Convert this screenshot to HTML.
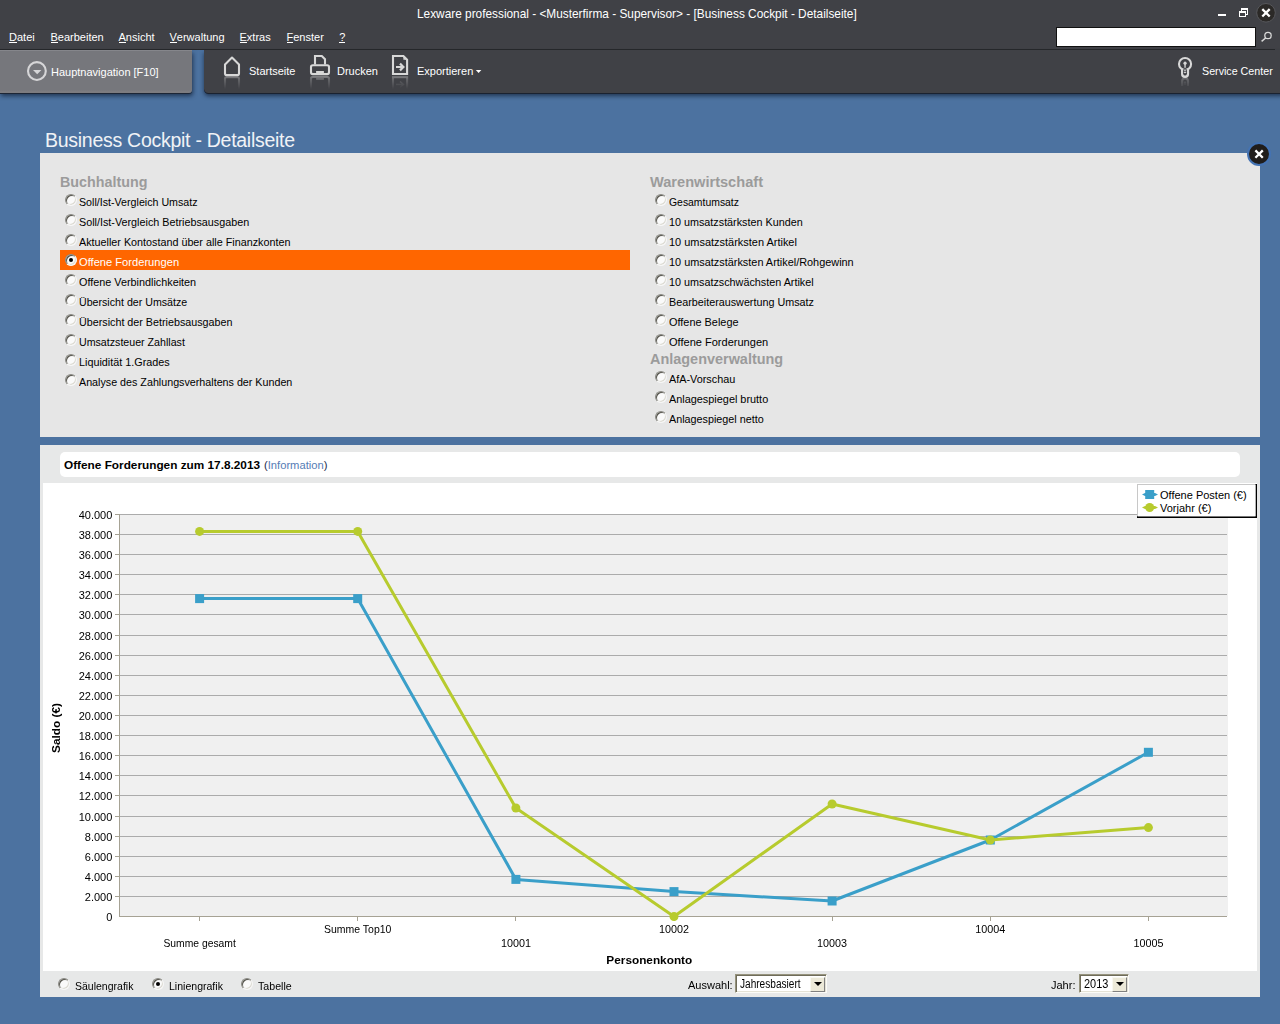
<!DOCTYPE html>
<html>
<head>
<meta charset="utf-8">
<title>Lexware professional</title>
<style>
*{box-sizing:border-box;margin:0;padding:0}
html,body{width:1280px;height:1024px;overflow:hidden}
body{background:#4c72a0;font-family:"Liberation Sans",sans-serif;font-size:11px;color:#000;position:relative}
.abs{position:absolute}
.t{position:absolute;white-space:nowrap;line-height:14px}
#top{left:0;top:0;width:1280px;height:50px;background:#404146}
#topline{left:0;top:49px;width:1275px;height:1px;background:#27282b}
#title{left:417px;top:6.5px;color:#fff;font-size:11.85px;line-height:15px}
.menu{top:30px;color:#fff;font-size:11px}
.menu u{text-decoration:none;position:relative}.menu u:after{content:"";position:absolute;left:0;right:0;top:11px;height:1px;background:#fff}
#search{left:1056px;top:27px;width:200px;height:20px;background:#fff;border:1px solid #111}
#navtab{left:0;top:50px;width:192px;height:43px;background:linear-gradient(#85868b 0,#85868b 1px,#76777c 1.5px,#76777c 40px,#7d7c80 41.5px);border-radius:0 0 3.5px 0;box-shadow:0 1px 0 #1d2636,1px 3px 4px rgba(15,28,50,.7)}
#toolbar{left:204px;top:50px;width:1080px;height:43px;background:#404146;border-radius:0 0 0 4.5px;box-shadow:0 1px 0 #1a2230,0 3px 4px rgba(15,28,50,.7)}
.tb{color:#fff;font-size:11px;top:63.5px}
#h1{left:45px;top:129px;font-size:19.5px;line-height:22px;letter-spacing:-0.27px;color:#f0f2f6}
#p1{left:40px;top:153px;width:1220px;height:284px;background:#e6e6e6}
#p2{left:40px;top:445px;width:1220px;height:552px;background:#e7e8e8}
#p2w{left:43px;top:483px;width:1214px;height:488px;background:#fff}
#tbox{left:60px;top:452px;width:1180px;height:25px;background:#fff;border-radius:5px}
.grp{font-weight:bold;font-size:14.2px;color:#9b9b9b;line-height:16px}
.opt{font-size:11px;line-height:14px}
.rb{position:absolute;width:12px;height:12px;border-radius:50%;background:#fafafa;border:1px solid;border-color:#8a8a84 #f6f6f6 #f6f6f6 #8a8a84;box-shadow:inset 1px 1px 0 #55544c,inset -1px -1px 0 #dcdad2}
.rb.on:after{content:"";position:absolute;left:3px;top:3px;width:4px;height:4px;border-radius:50%;background:#000}
#sel{left:60px;top:250px;width:570px;height:20px;background:#ff6600}
#close{left:1246.8px;top:141.7px;width:24.5px;height:24.5px;border-radius:50%;background:#201d1b;border:2.5px solid #4473b3}
svg text{font-family:"Liberation Sans",sans-serif}
.ax{font-size:11px;fill:#000}
.axb{font-size:11.8px;font-weight:bold;fill:#000}
.combo{position:absolute;height:19px;background:#fff;border:1px solid;border-color:#96937d #fbfbf8 #fbfbf8 #96937d;box-shadow:inset 1px 1px 0 #6f6c5a,inset -1px -1px 0 #e4e2d6}
.combo .btn{position:absolute;right:1px;top:1.5px;width:15.5px;height:15px;background:#ece9d8;border:1px solid;border-color:#f8f8f0 #808080 #808080 #f8f8f0}
.combo .btn:after{content:"";position:absolute;left:3px;top:4px;border:4px solid transparent;border-top:4px solid #000;border-bottom:0}
.combo span{position:absolute;left:4px;top:1.5px;font-size:12.5px;line-height:15px;color:#000;transform:scaleX(.83);transform-origin:left;white-space:nowrap}
</style>
</head>
<body>
<div class="abs" id="top"></div>
<div class="abs" id="topline"></div>
<div class="t" id="title">Lexware professional - &lt;Musterfirma - Supervisor&gt; - [Business Cockpit - Detailseite]</div>

<div class="t menu" style="left:9px"><u>D</u>atei</div>
<div class="t menu" style="left:50.5px"><u>B</u>earbeiten</div>
<div class="t menu" style="left:118.5px"><u>A</u>nsicht</div>
<div class="t menu" style="left:169.5px"><u>V</u>erwaltung</div>
<div class="t menu" style="left:239.5px"><u>E</u>xtras</div>
<div class="t menu" style="left:286.5px"><u>F</u>enster</div>
<div class="t menu" style="left:339.3px"><u>?</u></div>

<div class="abs" id="search"></div>

<div class="abs" id="navtab"></div>
<div class="abs" id="toolbar"></div>
<div class="t tb" style="left:51px;top:64.5px">Hauptnavigation [F10]</div>
<div class="t tb" style="left:249px">Startseite</div>
<div class="t tb" style="left:337px">Drucken</div>
<div class="t tb" style="left:417px">Exportieren</div>
<div class="t tb" style="left:1202px;font-size:10.7px">Service Center</div>

<!-- icons -->
<svg class="abs" style="left:0;top:0" width="1280" height="110" viewBox="0 0 1280 110">
 <defs>
  <linearGradient id="fade" x1="0" y1="76" x2="0" y2="89" gradientUnits="userSpaceOnUse">
   <stop offset="0" stop-color="#fff" stop-opacity=".45"/><stop offset=".25" stop-color="#fff" stop-opacity=".25"/><stop offset="1" stop-color="#fff" stop-opacity="0"/>
  </linearGradient>
  <mask id="fm" maskUnits="userSpaceOnUse" x="0" y="74" width="1280" height="20"><rect x="0" y="74" width="1280" height="20" fill="url(#fade)"/></mask>
 </defs>
 <!-- window controls -->
 <rect x="1218" y="14" width="8" height="2" fill="#fff"/>
 <g fill="none" stroke="#fff" stroke-width="1">
  <rect x="1241.5" y="9.5" width="6" height="5"/><rect x="1241" y="8" width="7" height="2" fill="#fff" stroke="none"/>
  <rect x="1239.5" y="12.5" width="6" height="4" fill="#404146"/><rect x="1239" y="11" width="7" height="2" fill="#fff" stroke="none"/>
 </g>
 <circle cx="1266" cy="12.8" r="9.3" fill="#2b2927" stroke="#56575b" stroke-width="1"/>
 <path d="M1262.3 9.1 L1269.7 16.5 M1269.7 9.1 L1262.3 16.5" stroke="#fff" stroke-width="2.3"/>
 <!-- magnifier -->
 <circle cx="1268" cy="35.5" r="3.2" fill="none" stroke="#d8d8d8" stroke-width="1.3"/>
 <path d="M1265.6 38 L1261.6 41.4" stroke="#d8d8d8" stroke-width="1.5"/>
 <!-- nav circle -->
 <circle cx="36.9" cy="71.05" r="8.9" fill="none" stroke="#d6d6d8" stroke-width="2.1"/>
 <path d="M33 70.1 h8.4 l-4.2 4.2 z" fill="#d6d6d8"/>
 <g id="ic" fill="none" stroke="#d8d8d8" stroke-width="2.1" stroke-linejoin="round">
  <!-- home -->
  <path d="M225 73.6 V64.6 L232 57.6 L239 64.6 V73.6 Q239 75.1 237.5 75.1 H226.5 Q225 75.1 225 73.6 Z"/>
  <!-- printer -->
  <path d="M315 64.5 V56 H321.8 L325 59.2 V64.5" stroke-linejoin="miter"/>
  <rect x="311" y="65.2" width="18" height="8.9" rx="1.8"/>
  <rect x="316.1" y="71" width="7.8" height="3.6" fill="#d8d8d8" stroke="none"/>
  <!-- export -->
  <path d="M393 74 V56 H403.4 L407.1 59.7 V74 Z" stroke-linejoin="miter"/>
  <path d="M403.4 55.5 V59.7 H407.6 Z" fill="#d8d8d8" stroke="none"/>
  <path d="M396 67 H402.5" stroke-width="2"/>
  <path d="M400 63.6 L403.4 67 L400 70.4" stroke-width="2.2" stroke-linejoin="miter"/>
  <!-- bulb -->
  <circle cx="1185.05" cy="64" r="6.05"/>
  <path d="M1182.2 68.8 V73.9 a2.85 2.85 0 0 0 5.7 0 V68.8" stroke-width="2.4"/>
 </g>
 <rect x="1183.1" y="69.4" width="3.9" height="4.8" fill="#404146"/>
 <rect x="1183.8" y="70.3" width="2.4" height="1" fill="#d8d8d8"/><rect x="1183.8" y="72.1" width="2.4" height="1" fill="#d8d8d8"/>
 <circle cx="1185.05" cy="63.2" r="1.6" fill="#d8d8d8"/><rect x="1184.35" y="63.2" width="1.4" height="4.6" fill="#d8d8d8"/>
 <path d="M475.8 70 h5.6 l-2.8 3 z" fill="#fff"/>
 <!-- reflections -->
 <g mask="url(#fm)" fill="none" stroke="#d8d8d8" stroke-width="2.1">
  <path d="M225 90 V78.5 Q225 77.2 226.5 77.2 H237.5 Q239 77.2 239 78.5 V90"/>
  <path d="M311 90 V78.8 Q311 77 312.8 77 H327.2 Q329 77 329 78.8 V90"/>
  <rect x="316.1" y="76.6" width="7.8" height="3.4" fill="#d8d8d8" stroke="none"/>
  <path d="M393 90 V77.2 H407.1 V90"/>
  <path d="M396 84.5 H402.5 M400 81.5 L403.4 84.5 L400 87.5" stroke-width="1.6" opacity=".8"/>
  <path d="M1182.1 86 V81.3 a2.95 2.95 0 0 1 5.9 0 V86"/>
  <path d="M1183.8 82.2 h2.4 M1183.8 84 h2.4" stroke-width="1"/>
 </g>
</svg>

<div class="t" id="h1">Business Cockpit - Detailseite</div>

<div class="abs" id="p1"></div>
<div class="abs" id="sel"></div>
<div class="t grp" style="left:60px;top:174.2px;font-size:14.3px">Buchhaltung</div>
<div class="t grp" style="left:650px;top:174.2px;font-size:14.6px">Warenwirtschaft</div>
<div class="t grp" style="left:650px;top:351px;font-size:14.45px">Anlagenverwaltung</div>
<div class="rb" style="left:65px;top:194px"></div>
<div class="t opt" style="transform:scaleX(0.9697);transform-origin:left;left:79px;top:194.8px">Soll/Ist-Vergleich Umsatz</div>
<div class="rb" style="left:65px;top:214px"></div>
<div class="t opt" style="transform:scaleX(0.9798);transform-origin:left;left:79px;top:214.8px">Soll/Ist-Vergleich Betriebsausgaben</div>
<div class="rb" style="left:65px;top:234px"></div>
<div class="t opt" style="transform:scaleX(0.9792);transform-origin:left;left:79px;top:234.8px">Aktueller Kontostand über alle Finanzkonten</div>
<div class="rb on" style="left:65px;top:254px"></div>
<div class="t opt" style="color:#fff;transform:scaleX(1.0122);transform-origin:left;left:79px;top:254.8px">Offene Forderungen</div>
<div class="rb" style="left:65px;top:274px"></div>
<div class="t opt" style="transform:scaleX(0.9840);transform-origin:left;left:79px;top:274.8px">Offene Verbindlichkeiten</div>
<div class="rb" style="left:65px;top:294px"></div>
<div class="t opt" style="transform:scaleX(0.9670);transform-origin:left;left:79px;top:294.8px">Übersicht der Umsätze</div>
<div class="rb" style="left:65px;top:314px"></div>
<div class="t opt" style="transform:scaleX(0.9764);transform-origin:left;left:79px;top:314.8px">Übersicht der Betriebsausgaben</div>
<div class="rb" style="left:65px;top:334px"></div>
<div class="t opt" style="transform:scaleX(0.9673);transform-origin:left;left:79px;top:334.8px">Umsatzsteuer Zahllast</div>
<div class="rb" style="left:65px;top:354px"></div>
<div class="t opt" style="transform:scaleX(0.9826);transform-origin:left;left:79px;top:354.8px">Liquidität 1.Grades</div>
<div class="rb" style="left:65px;top:374px"></div>
<div class="t opt" style="transform:scaleX(0.9744);transform-origin:left;left:79px;top:374.8px">Analyse des Zahlungsverhaltens der Kunden</div>
<div class="rb" style="left:655px;top:194px"></div>
<div class="t opt" style="transform:scaleX(0.9459);transform-origin:left;left:669px;top:194.8px">Gesamtumsatz</div>
<div class="rb" style="left:655px;top:214px"></div>
<div class="t opt" style="transform:scaleX(0.9801);transform-origin:left;left:669px;top:214.8px">10 umsatzstärksten Kunden</div>
<div class="rb" style="left:655px;top:234px"></div>
<div class="t opt" style="transform:scaleX(0.9961);transform-origin:left;left:669px;top:234.8px">10 umsatzstärksten Artikel</div>
<div class="rb" style="left:655px;top:254px"></div>
<div class="t opt" style="transform:scaleX(0.9903);transform-origin:left;left:669px;top:254.8px">10 umsatzstärksten Artikel/Rohgewinn</div>
<div class="rb" style="left:655px;top:274px"></div>
<div class="t opt" style="transform:scaleX(0.9816);transform-origin:left;left:669px;top:274.8px">10 umsatzschwächsten Artikel</div>
<div class="rb" style="left:655px;top:294px"></div>
<div class="t opt" style="transform:scaleX(0.9797);transform-origin:left;left:669px;top:294.8px">Bearbeiterauswertung Umsatz</div>
<div class="rb" style="left:655px;top:314px"></div>
<div class="t opt" style="transform:scaleX(0.9914);transform-origin:left;left:669px;top:314.8px">Offene Belege</div>
<div class="rb" style="left:655px;top:334px"></div>
<div class="t opt" style="transform:scaleX(1.0030);transform-origin:left;left:669px;top:334.8px">Offene Forderungen</div>
<div class="rb" style="left:655px;top:371px"></div>
<div class="t opt" style="transform:scaleX(0.9851);transform-origin:left;left:669px;top:372px">AfA-Vorschau</div>
<div class="rb" style="left:655px;top:391px"></div>
<div class="t opt" style="transform:scaleX(0.9890);transform-origin:left;left:669px;top:392px">Anlagespiegel brutto</div>
<div class="rb" style="left:655px;top:411px"></div>
<div class="t opt" style="transform:scaleX(0.9804);transform-origin:left;left:669px;top:412px">Anlagespiegel netto</div>
<div class="abs" id="close"></div>
<svg class="abs" style="left:1248px;top:143px" width="22" height="22"><path d="M7.4 7.4 L14.8 14.8 M14.8 7.4 L7.4 14.8" stroke="#fff" stroke-width="2.3"/></svg>

<div class="abs" id="p2"></div>
<div class="abs" id="tbox"></div>
<div class="abs" id="p2w"></div>
<div class="t" style="left:64px;top:458px;font-size:11.8px;font-weight:bold">Offene Forderungen zum 17.8.2013</div>
<div class="t" style="left:264px;top:458px;font-size:11.2px;color:#1c2b4a">(<span style="color:#557cb5">Information</span>)</div>

<svg class="abs" style="left:0;top:0" width="1280" height="1024" viewBox="0 0 1280 1024">
<rect x="120" y="514" width="1108" height="402" fill="#f0f0f0"/>
<rect x="120" y="896" width="1107" height="1" fill="#ababab"/>
<rect x="120" y="876" width="1107" height="1" fill="#ababab"/>
<rect x="120" y="856" width="1107" height="1" fill="#ababab"/>
<rect x="120" y="836" width="1107" height="1" fill="#ababab"/>
<rect x="120" y="816" width="1107" height="1" fill="#ababab"/>
<rect x="120" y="795" width="1107" height="1" fill="#ababab"/>
<rect x="120" y="775" width="1107" height="1" fill="#ababab"/>
<rect x="120" y="755" width="1107" height="1" fill="#ababab"/>
<rect x="120" y="735" width="1107" height="1" fill="#ababab"/>
<rect x="120" y="715" width="1107" height="1" fill="#ababab"/>
<rect x="120" y="695" width="1107" height="1" fill="#ababab"/>
<rect x="120" y="675" width="1107" height="1" fill="#ababab"/>
<rect x="120" y="655" width="1107" height="1" fill="#ababab"/>
<rect x="120" y="635" width="1107" height="1" fill="#ababab"/>
<rect x="120" y="614" width="1107" height="1" fill="#ababab"/>
<rect x="120" y="594" width="1107" height="1" fill="#ababab"/>
<rect x="120" y="574" width="1107" height="1" fill="#ababab"/>
<rect x="120" y="554" width="1107" height="1" fill="#ababab"/>
<rect x="120" y="534" width="1107" height="1" fill="#ababab"/>
<rect x="120" y="514" width="1107" height="1" fill="#ababab"/>
<rect x="119" y="514" width="1" height="403" fill="#a6a294"/>
<rect x="119" y="916" width="1108" height="1" fill="#a6a294"/>
<text x="112.3" y="920.6" text-anchor="end" class="ax">0</text>
<rect x="115" y="896" width="4" height="1" fill="#a6a294"/>
<text x="112.3" y="900.6" text-anchor="end" class="ax">2.000</text>
<rect x="115" y="876" width="4" height="1" fill="#a6a294"/>
<text x="112.3" y="880.6" text-anchor="end" class="ax">4.000</text>
<rect x="115" y="856" width="4" height="1" fill="#a6a294"/>
<text x="112.3" y="860.6" text-anchor="end" class="ax">6.000</text>
<rect x="115" y="836" width="4" height="1" fill="#a6a294"/>
<text x="112.3" y="840.6" text-anchor="end" class="ax">8.000</text>
<rect x="115" y="816" width="4" height="1" fill="#a6a294"/>
<text x="112.3" y="820.6" text-anchor="end" class="ax">10.000</text>
<rect x="115" y="795" width="4" height="1" fill="#a6a294"/>
<text x="112.3" y="799.6" text-anchor="end" class="ax">12.000</text>
<rect x="115" y="775" width="4" height="1" fill="#a6a294"/>
<text x="112.3" y="779.6" text-anchor="end" class="ax">14.000</text>
<rect x="115" y="755" width="4" height="1" fill="#a6a294"/>
<text x="112.3" y="759.6" text-anchor="end" class="ax">16.000</text>
<rect x="115" y="735" width="4" height="1" fill="#a6a294"/>
<text x="112.3" y="739.6" text-anchor="end" class="ax">18.000</text>
<rect x="115" y="715" width="4" height="1" fill="#a6a294"/>
<text x="112.3" y="719.6" text-anchor="end" class="ax">20.000</text>
<rect x="115" y="695" width="4" height="1" fill="#a6a294"/>
<text x="112.3" y="699.6" text-anchor="end" class="ax">22.000</text>
<rect x="115" y="675" width="4" height="1" fill="#a6a294"/>
<text x="112.3" y="679.6" text-anchor="end" class="ax">24.000</text>
<rect x="115" y="655" width="4" height="1" fill="#a6a294"/>
<text x="112.3" y="659.6" text-anchor="end" class="ax">26.000</text>
<rect x="115" y="635" width="4" height="1" fill="#a6a294"/>
<text x="112.3" y="639.6" text-anchor="end" class="ax">28.000</text>
<rect x="115" y="614" width="4" height="1" fill="#a6a294"/>
<text x="112.3" y="618.6" text-anchor="end" class="ax">30.000</text>
<rect x="115" y="594" width="4" height="1" fill="#a6a294"/>
<text x="112.3" y="598.6" text-anchor="end" class="ax">32.000</text>
<rect x="115" y="574" width="4" height="1" fill="#a6a294"/>
<text x="112.3" y="578.6" text-anchor="end" class="ax">34.000</text>
<rect x="115" y="554" width="4" height="1" fill="#a6a294"/>
<text x="112.3" y="558.6" text-anchor="end" class="ax">36.000</text>
<rect x="115" y="534" width="4" height="1" fill="#a6a294"/>
<text x="112.3" y="538.6" text-anchor="end" class="ax">38.000</text>
<rect x="115" y="514" width="4" height="1" fill="#a6a294"/>
<text x="112.3" y="518.6" text-anchor="end" class="ax">40.000</text>
<rect x="199" y="917" width="1" height="4" fill="#a6a294"/>
<text x="199.6" y="946.6" text-anchor="middle" class="ax" textLength="72.4" lengthAdjust="spacingAndGlyphs">Summe gesamt</text>
<rect x="357" y="917" width="1" height="4" fill="#a6a294"/>
<text x="357.7" y="932.6" text-anchor="middle" class="ax" textLength="67.4" lengthAdjust="spacingAndGlyphs">Summe Top10</text>
<rect x="515" y="917" width="1" height="4" fill="#a6a294"/>
<text x="515.9" y="946.6" text-anchor="middle" class="ax" textLength="30" lengthAdjust="spacingAndGlyphs">10001</text>
<rect x="674" y="917" width="1" height="4" fill="#a6a294"/>
<text x="674.0" y="932.6" text-anchor="middle" class="ax" textLength="30" lengthAdjust="spacingAndGlyphs">10002</text>
<rect x="832" y="917" width="1" height="4" fill="#a6a294"/>
<text x="832.1" y="946.6" text-anchor="middle" class="ax" textLength="30" lengthAdjust="spacingAndGlyphs">10003</text>
<rect x="990" y="917" width="1" height="4" fill="#a6a294"/>
<text x="990.3" y="932.6" text-anchor="middle" class="ax" textLength="30" lengthAdjust="spacingAndGlyphs">10004</text>
<rect x="1148" y="917" width="1" height="4" fill="#a6a294"/>
<text x="1148.4" y="946.6" text-anchor="middle" class="ax" textLength="30" lengthAdjust="spacingAndGlyphs">10005</text>
<polyline points="199.6,598.6 357.7,598.6 515.9,879.4 674.0,891.6 832.1,901 990.3,840 1148.4,752.3" fill="none" stroke="#3a9fc9" stroke-width="3" stroke-linejoin="round"/>
<rect x="195.1" y="594.1" width="9" height="9" fill="#3a9fc9"/>
<rect x="353.2" y="594.1" width="9" height="9" fill="#3a9fc9"/>
<rect x="511.4" y="874.9" width="9" height="9" fill="#3a9fc9"/>
<rect x="669.5" y="887.1" width="9" height="9" fill="#3a9fc9"/>
<rect x="827.6" y="896.5" width="9" height="9" fill="#3a9fc9"/>
<rect x="985.8" y="835.5" width="9" height="9" fill="#3a9fc9"/>
<rect x="1143.9" y="747.8" width="9" height="9" fill="#3a9fc9"/>
<polyline points="199.6,531.4 357.7,531.4 515.9,808 674.0,916.5 832.1,804 990.3,840 1148.4,827.6" fill="none" stroke="#b7cb2e" stroke-width="3" stroke-linejoin="round"/>
<circle cx="199.6" cy="531.4" r="4.5" fill="#b7cb2e"/>
<circle cx="357.7" cy="531.4" r="4.5" fill="#b7cb2e"/>
<circle cx="515.9" cy="808" r="4.5" fill="#b7cb2e"/>
<circle cx="674.0" cy="916.5" r="4.5" fill="#b7cb2e"/>
<circle cx="832.1" cy="804" r="4.5" fill="#b7cb2e"/>
<circle cx="990.3" cy="840" r="4.5" fill="#b7cb2e"/>
<circle cx="1148.4" cy="827.6" r="4.5" fill="#b7cb2e"/>
<text x="649.3" y="963.5" text-anchor="middle" class="axb">Personenkonto</text>
<text transform="translate(60.2,728) rotate(-90)" text-anchor="middle" class="axb">Saldo (€)</text>
<rect x="1137" y="484" width="120" height="34" fill="#000"/>
<rect x="1137" y="484" width="118.5" height="32.3" fill="#c8c8c8"/>
<rect x="1138" y="485" width="117.5" height="31.3" fill="#fff"/>
<path d="M1142 494.5 l3 -1.5 h10 l3 1.5 l-3 1.5 h-10 z" fill="#3a9fc9"/>
<rect x="1145.2" y="490" width="9" height="9" fill="#3a9fc9"/>
<path d="M1142 507.5 l3 -1.5 h10 l3 1.5 l-3 1.5 h-10 z" fill="#b7cb2e"/>
<circle cx="1149.7" cy="507.5" r="4.5" fill="#b7cb2e"/>
<text x="1160" y="498.5" class="ax">Offene Posten (€)</text>
<text x="1160" y="511.6" class="ax">Vorjahr (€)</text>
</svg>

<div class="rb" style="left:58px;top:978px"></div>
<div class="t opt" style="left:75px;top:978.5px;transform:scaleX(.955);transform-origin:left">Säulengrafik</div>
<div class="rb on" style="left:152px;top:978px"></div>
<div class="t opt" style="left:169px;top:978.5px;transform:scaleX(.958);transform-origin:left">Liniengrafik</div>
<div class="rb" style="left:241px;top:978px"></div>
<div class="t opt" style="left:258px;top:978.5px;transform:scaleX(.966);transform-origin:left">Tabelle</div>

<div class="t opt" style="left:688px;top:977.5px">Auswahl:</div>
<div class="combo" style="left:735px;top:974px;width:92px"><span style="transform:scaleX(.807)">Jahresbasiert</span><div class="btn"></div></div>
<div class="t opt" style="left:1051px;top:977.5px">Jahr:</div>
<div class="combo" style="left:1079px;top:974px;width:50px"><span style="transform:scaleX(.875)">2013</span><div class="btn"></div></div>
</body>
</html>
